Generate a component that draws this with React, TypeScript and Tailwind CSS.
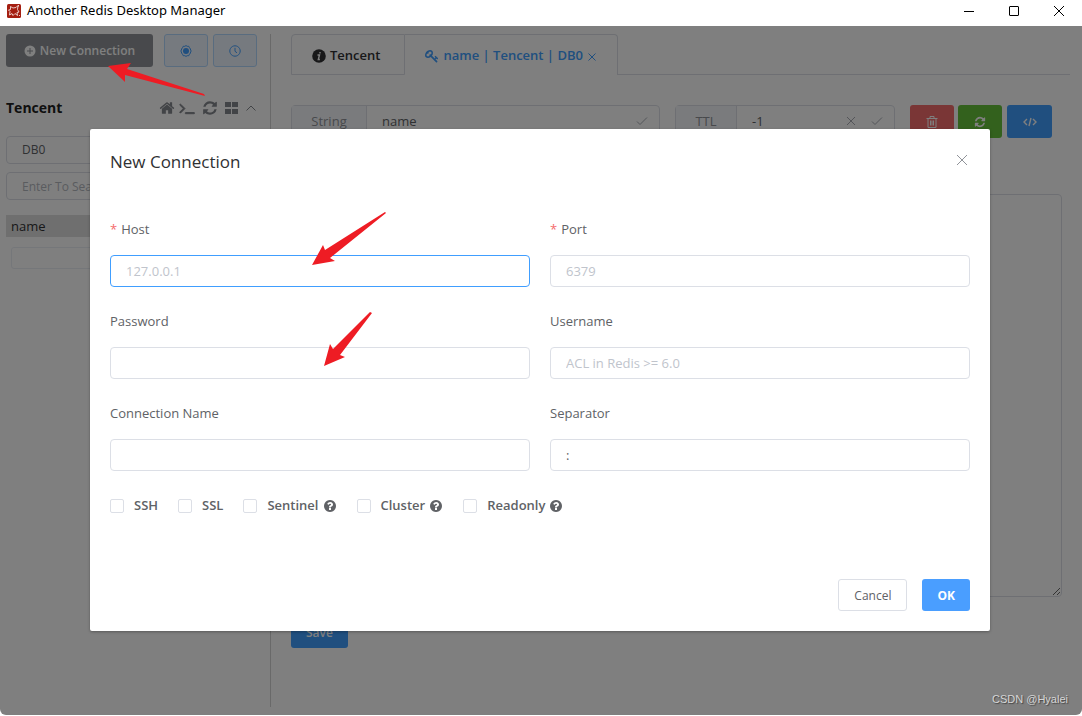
import React, { type ReactNode } from "react";

type IconProps = { className?: string };

const fa = (d: string, heavy = false) =>
  function FaIcon({ className = "" }: IconProps) {
    return (
      <svg viewBox="0 0 1792 1792" fill="currentColor" stroke="currentColor" strokeWidth={heavy ? 110 : 0} className={className} aria-hidden="true">
        <path d={d} />
      </svg>
    );
  };

const HomeIcon = fa(
  "M1472 992v480q0 26-19 45t-45 19h-384v-384h-256v384h-384q-26 0-45-19t-19-45v-480q0-1 .5-3t.5-3l575-474 575 474q1 2 1 6zm223-69l-62 74q-8 9-21 11h-3q-13 0-21-7l-692-577-692 577q-12 8-24 7-13-2-21-11l-62-74q-8-10-7-23.5t11-21.5l719-599q32-26 76-26t76 26l244 204v-195q0-14 9-23t23-9h192q14 0 23 9t9 23v408l219 182q10 8 11 21.5t-7 23.5z",
);
const TerminalIcon = fa(
  "M649 983l-466 466q-10 10-23 10t-23-10l-50-50q-10-10-10-23t10-23l393-393-393-393q-10-10-10-23t10-23l50-50q10-10 23-10t23 10l466 466q10 10 10 23t-10 23zm1079 457v64q0 14-9 23t-23 9h-960q-14 0-23-9t-9-23v-64q0-14 9-23t23-9h960q14 0 23 9t9 23z",
  true,
);
const RefreshIcon = fa(
  "M1639 1056q0 5-1 7-64 268-268 434.5t-478 166.5q-146 0-282.5-55t-243.5-157l-129 129q-19 19-45 19t-45-19-19-45v-448q0-26 19-45t45-19h448q26 0 45 19t19 45-19 45l-137 137q71 66 161 102t187 36q134 0 250-65t186-179q11-17 53-117 8-23 30-23h192q13 0 22.5 9.5t9.5 22.5zm25-800v448q0 26-19 45t-45 19h-448q-26 0-45-19t-19-45 19-45l138-138q-148-137-349-137-134 0-250 65t-186 179q-11 17-53 117-8 23-30 23h-199q-13 0-22.5-9.5t-9.5-22.5v-7q65-268 270-434.5t480-166.5q146 0 284 55.5t245 156.5l130-129q19-19 45-19t45 19 19 45z",
);
const KeyIcon = fa(
  "M832 512q0-80-56-136t-136-56-136 56-56 136q0 42 19 83-41-19-83-19-80 0-136 56t-56 136 56 136 136 56 136-56 56-136q0-42-19-83 41 19 83 19 80 0 136-56t56-136zm851 704q0 17-49 66t-66 49q-9 0-28.5-16t-36.5-33-38.5-40-24.5-26l-96 96 220 220q28 28 28 68 0 42-39 81t-81 39q-40 0-68-28l-671-671q-176 131-365 131-163 0-265.5-102.5t-102.5-265.5q0-160 95-313t248-248 313-95q163 0 265.5 102.5t102.5 265.5q0 189-131 365l355 355 96-96q-3-3-26-24.5t-40-38.5-33-36.5-16-28.5q0-17 49-66t66-49q13 0 23 10 6 6 46 44.5t82 79.5 86.5 86 73 78 28.5 41z",
);
const QuestionIcon = fa(
  "M1024 1376v-192q0-14-9-23t-23-9h-192q-14 0-23 9t-9 23v192q0 14 9 23t23 9h192q14 0 23-9t9-23zm256-672q0-88-55.5-163t-138.5-116-170-41q-243 0-371 213-15 24 8 42l132 100q7 6 19 6 16 0 25-12 53-68 86-92 34-24 86-24 48 0 85.5 26t37.5 59q0 38-20 61t-68 45q-63 28-115.5 86.5t-52.5 125.5v36q0 14 9 23t23 9h192q14 0 23-9t9-23q0-19 21.5-49.5t54.5-49.5q32-18 49-28.5t46-35 44.5-48 28-60.5 12.5-81zm384 192q0 209-103 385.5t-279.5 279.5-385.5 103-385.5-103-279.5-279.5-103-385.5 103-385.5 279.5-279.5 385.5-103 385.5 103 279.5 279.5 103 385.5z",
);

function Line({ d, box = 16, width = 1, className = "" }: { d: string; box?: number; width?: number; className?: string }) {
  return (
    <svg viewBox={`0 0 ${box} ${box}`} fill="none" stroke="currentColor" strokeWidth={width} className={className} aria-hidden="true">
      <path d={d} />
    </svg>
  );
}

function Logo() {
  return (
    <svg viewBox="0 0 14 14" className="size-3.5" aria-hidden="true">
      <rect width="14" height="14" rx="1.5" fill="#a41e11" />
      <path d="M3.5 2.5L6 4l3-.5 2-2-.5 4L12 8l-2 .5.5 3-2.500-2L6 11.500 5 9.500 2.500 11l.5-3.500L1.500 6l2-.5z" fill="none" stroke="#f3dcd8" strokeWidth=".9" />
      <path d="M11.500 1v1.500M12.500 11v1" stroke="#f3dcd8" strokeWidth=".9" />
    </svg>
  );
}

function GearIcon() {
  return (
    <svg viewBox="0 0 14 14" className="size-3.5" aria-hidden="true">
      <path d="M4.200 2.300h1.600L7 1.600l1.200.7h1.600l.7 1.500 1 1.200v1l.8 1-.8 1v1l-1 1.200-.7 1.500H8.200l-1.200.7-1.200-.7H4.200l-.7-1.500-1-1.200V8l-.8-1 .8-1V5l1-1.200z" fill="none" stroke="currentColor" strokeWidth="1" />
      <circle cx="7" cy="7" r="3" fill="currentColor" />
    </svg>
  );
}

function Field({ id, label, required, placeholder, value, active }: { id: string; label: string; required?: boolean; placeholder?: string; value?: string; active?: boolean }) {
  return (
    <div className="flex flex-col">
      <label htmlFor={id} className="h-10 text-[13px] leading-10 text-[#606266]">
        {required && <span className="mr-1 text-[#f56c6c]">*</span>}
        {label}
      </label>
      <div className="py-1.5">
        <input
          id={id}
          placeholder={placeholder}
          defaultValue={value}
          className={`h-8 w-full rounded border bg-white px-[15px] text-[13px] font-medium text-[#606266] outline-none placeholder:text-[#c0c4cc] ${active ? "border-[#409eff]" : "border-[#dcdfe6]"}`}
        />
      </div>
    </div>
  );
}

function Check({ label, help }: { label: string; help?: boolean }) {
  return (
    <label className="flex items-center text-[13px] font-semibold text-[#606266]">
      <input type="checkbox" className="mr-2.5 size-3.5 appearance-none rounded-xs border border-[#dcdfe6] bg-white" />
      {label}
      {help && <QuestionIcon className="ml-1 size-3.5" />}
    </label>
  );
}

function IconButton({ label, className, children }: { label: string; className: string; children: ReactNode }) {
  return (
    <button aria-label={label} className={`flex h-[33px] w-11 items-center justify-center rounded-[3px] ${className}`}>
      {children}
    </button>
  );
}

function Sidebar() {
  return (
    <aside className="mt-2 mb-2 flex w-[271px] shrink-0 flex-col border-r border-[#d2d2d2] pr-[13px] pl-1.5">
      <div className="flex">
        <button className="mr-[11px] flex h-[33px] flex-1 items-center justify-center gap-1 rounded-[3px] bg-[#909399] text-xs font-semibold text-white">
          <svg viewBox="0 0 12 12" className="size-3" aria-hidden="true">
            <circle cx="6" cy="6" r="5.500" fill="currentColor" />
            <path d="M3 6h6M6 3v6" stroke="#909399" strokeWidth="1" />
          </svg>
          New Connection
        </button>
        <IconButton label="Settings" className="mr-[5px] border border-[#b3d8ff] bg-[#ecf5ff] text-[#409eff]">
          <GearIcon />
        </IconButton>
        <IconButton label="Command log" className="border border-[#b3d8ff] bg-[#ecf5ff] text-[#409eff]">
          <Line box={14} className="size-3.5" d="M7 1.800a5.200 5.200 0 1 0 .01 0M7 3.800v3.500l2 1.500" />
        </IconButton>
      </div>
      <div className="mt-[27px] flex h-7 items-center text-[#85888e]">
        <h2 className="flex-1 text-sm font-bold text-[#212121]">Tencent</h2>
        <HomeIcon className="mr-1 size-4" />
        <TerminalIcon className="mr-[7px] size-4" />
        <RefreshIcon className="mr-[7px] size-4" />
        <svg viewBox="0 0 13 12" fill="currentColor" className="mr-[7px] h-3 w-[13px]" aria-hidden="true">
          <path d="M0 0h6v5H0zM7 0h6v5H7zM0 7h6v5H0zM7 7h6v5H7z" />
        </svg>
        <Line box={12} className="size-3" d="M1.500 8.500L6 4l4.500 4.500" />
      </div>
      <select aria-label="Database" className="mt-3.5 h-7 w-full appearance-none rounded border border-[#dcdfe6] bg-white px-[15px] text-xs text-[#606266]">
        <option>DB0</option>
      </select>
      <input aria-label="Search" placeholder="Enter To Search" className="mt-2 h-7 w-full rounded border border-[#dcdfe6] bg-white px-[15px] text-xs placeholder:text-[#b4b8bf]" />
      <div className="mt-[15px] h-[22px] bg-[#dfdfdf] px-[5px] text-[13px] leading-[22px] text-[#303133]">name</div>
      <input aria-label="Load more" className="mt-2.5 ml-[5px] h-[22px] rounded-[3px] border border-[#ebeef5] bg-white" />
    </aside>
  );
}

function Workspace() {
  return (
    <main className="flex min-w-0 flex-1 flex-col pt-2 pr-5 pl-5">
      <div className="-mr-2 flex h-[41px] text-[13px] font-semibold">
        <button className="flex items-center gap-1 rounded-tl border border-[#dcdfe6] pt-0.5 pr-6 pl-5 text-[#303133]">
          <svg viewBox="0 0 14 14" className="size-3.5" aria-hidden="true">
            <circle cx="7" cy="7" r="6.800" fill="currentColor" />
            <path d="M5.500 6h2l-1.200 4.500h1.600M8 3v1.600" fill="none" stroke="#fff" strokeWidth="1.400" />
          </svg>
          Tencent
        </button>
        <button className="flex items-center rounded-tr border-t border-r border-[#dcdfe6] pt-0.5 pr-[18px] pl-5 text-[#409eff]">
          <KeyIcon className="mr-1 size-3.5" />
          name | Tencent | DB0
          <Line box={14} className="ml-0.5 size-3.5" d="M3.500 4.500l7 7M10.500 4.500l-7 7" />
        </button>
        <div className="flex-1 border-b border-[#dcdfe6]" />
      </div>
      <div className="mt-[30px] flex pr-2.5 text-[13px]">
        <div className="flex h-8 flex-1 rounded border border-[#dcdfe6]">
          <label htmlFor="key" className="w-[75px] border-r border-[#dcdfe6] bg-[#f5f7fa] text-center leading-[31px] text-[#909399]">String</label>
          <input id="key" defaultValue="name" className="min-w-0 flex-1 px-[15px] pt-0.5 text-[#606266]" />
          <Line box={14} className="mt-2 mr-2.5 size-3.5 text-[#a8abb2]" d="M2 7.500l3 3 7-7" />
        </div>
        <div className="mr-[15px] ml-[15px] flex h-8 w-[220px] rounded border border-[#dcdfe6]">
          <label htmlFor="ttl" className="w-[61px] border-r border-[#dcdfe6] bg-[#f5f7fa] text-center leading-[31px] text-[#909399]">TTL</label>
          <input id="ttl" defaultValue="-1" className="min-w-0 flex-1 px-[15px] pt-0.5 text-[#606266]" />
          <Line box={14} className="mt-2 mr-3 size-3.5 text-[#a8abb2]" d="M3 3l8 8M11 3l-8 8" />
          <Line box={14} className="mt-2 mr-2.5 size-3.5 text-[#a8abb2]" d="M2 7.500l3 3 7-7" />
        </div>
        <IconButton label="Delete key" className="mr-1 bg-[#f56c6c] text-white">
          <Line box={12} className="size-3" d="M.5 2.500h11M4 2.500v-2h4v2M2 2.500v9h8v-9M4.500 4.500v5M6 4.500v5M7.500 4.500v5" />
        </IconButton>
        <IconButton label="Reload key" className="mr-[5px] bg-[#67c23a] text-white">
          <RefreshIcon className="size-3" />
        </IconButton>
        <button aria-label="Copy command" className="flex h-[33px] w-[45px] items-center justify-center rounded-[3px] bg-[#409eff] text-white">
          <Line box={14} width={1.4} className="size-3.5" d="M4 4L1 7l3 3M10 4l3 3-3 3M8 3L6 11" />
        </button>
      </div>
      <textarea aria-label="Value" className="mt-14 h-[403px] w-full resize rounded border border-[#dcdfe6] bg-white" />
      <button className="mt-[19px] h-8 self-start rounded-[3px] bg-[#409eff] px-[15px] pt-0.5 text-xs font-semibold text-white">Save</button>
    </main>
  );
}

function ConnectionDialog() {
  return (
    <section role="dialog" aria-label="New Connection" className="w-[900px] max-w-full rounded-xs bg-white shadow-[0_1px_3px_rgba(0,0,0,0.3)]">
      <header className="flex items-start justify-between px-5 pt-5">
        <h1 className="text-[17px] leading-[26px] text-[#303133]">New Connection</h1>
        <button aria-label="Close" className="pt-[3px] text-[#909399]">
          <Line className="size-4" d="M3 3l10 10M13 3L3 13" />
        </button>
      </header>
      <form className="px-5 pt-[34px]" onSubmit={(e) => e.preventDefault()}>
        <div className="grid grid-cols-2 gap-x-5 gap-y-2">
          <Field id="host" label="Host" required placeholder="127.0.0.1" active />
          <Field id="port" label="Port" required placeholder="6379" />
          <Field id="password" label="Password" />
          <Field id="username" label="Username" placeholder="ACL in Redis >= 6.0" />
          <Field id="connection" label="Connection Name" />
          <Field id="separator" label="Separator" value=":" />
        </div>
        <div className="mt-[19px] flex h-5 items-center gap-5">
          <Check label="SSH" />
          <Check label="SSL" />
          <Check label="Sentinel" help />
          <Check label="Cluster" help />
          <Check label="Readonly" help />
        </div>
        <div className="flex justify-end gap-[15px] pt-[63px] pb-5 text-xs">
          <button type="button" className="h-8 rounded-[3px] border border-[#dcdfe6] px-[15px] pt-0.5 font-medium text-[#606266]">Cancel</button>
          <button type="submit" className="h-8 rounded-[3px] bg-[#4a9eff] px-[15px] pt-0.5 font-bold text-white">OK</button>
        </div>
      </form>
    </section>
  );
}

function Arrow({ points, className }: { points: string; className: string }) {
  return (
    <svg className={`pointer-events-none absolute ${className}`} fill="#ee1c24" aria-hidden="true">
      <polygon points={points} />
    </svg>
  );
}

export default function App() {
  return (
    <div className="relative flex min-h-screen flex-col bg-white font-['Open_Sans','Noto_Sans',sans-serif]">
      <header className="flex h-[26px] items-center pr-[17px] pb-[5px] pl-[7px] text-black">
        <Logo />
        <span className="ml-1.5 flex-1 pb-0.5 font-['Noto_Sans',sans-serif] text-[13px] leading-[18px]">Another Redis Desktop Manager</span>
        <div className="flex gap-[33px]">
          <button aria-label="Minimize"><Line box={12} className="size-3" d="M1 6.500h10" /></button>
          <button aria-label="Maximize"><Line box={12} className="size-3" d="M2 1.500h8q.5 0 .5.5v8q0 .5-.5.5H2q-.5 0-.5-.5V2q0-.5.5-.5z" /></button>
          <button aria-label="Close window"><Line box={12} className="size-3" d="M1 1l10 10M11 1L1 11" /></button>
        </div>
      </header>
      <div className="relative mb-px flex flex-1 overflow-hidden rounded-b-md">
        <Sidebar />
        <Workspace />
        <div className="absolute inset-0 flex items-start justify-center bg-black/50 pt-[103px] pr-0.5">
          <ConnectionDialog />
        </div>
      </div>
      <Arrow className="top-[62px] left-[107px] h-9 w-[100px]" points="1,4 24,1 20,7 97,32 98,34 18,13 18,20" />
      <Arrow className="top-[210px] left-[311px] h-14 w-[76px]" points="1,55 12,35 14,40 74,2 75,3 19,48 24,51" />
      <Arrow className="top-[310px] left-[323px] h-14 w-[50px]" points="1,56 7,34 10,39 47,2 49,3 17,45 22,47" />
      <p className="absolute right-3.5 bottom-[9px] font-['Liberation_Sans',sans-serif] text-[11px] text-[#d6d6d6] [text-shadow:1px_1px_1px_#444]">CSDN @Hyalei</p>
    </div>
  );
}
